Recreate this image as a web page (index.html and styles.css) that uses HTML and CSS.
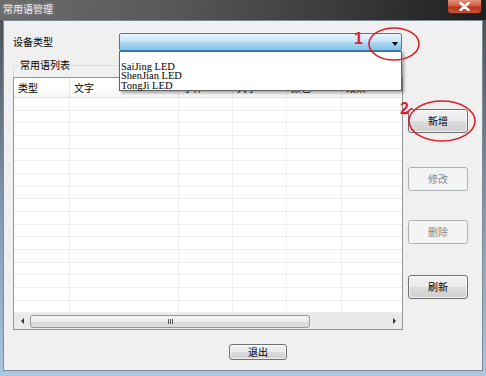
FILE: index.html
```html
<!DOCTYPE html>
<html lang="zh-CN">

<head>
  <meta charset="UTF-8">
  <title>常用语管理</title>
  <link rel="stylesheet" href="styles.css">
</head>

<body>
  <div class="window">
    <div class="titlebar">
      <span class="title">常用语管理</span>
      <button class="close">
        <svg width="11" height="9" viewBox="0 0 11 9"><path d="M1.5 1 L9.5 8 M9.5 1 L1.5 8" stroke="#fff" stroke-width="2.4" stroke-linecap="round"/></svg>
      </button>
    </div>
    <div class="client">
      <div class="device-row">
        <label class="device-label">设备类型</label>
        <div class="combo">
          <span class="combo-arrow"></span>
          <ul class="combo-list">
            <li></li>
            <li>SaiJing LED</li>
            <li>ShenJian LED</li>
            <li>TongJi LED</li>
          </ul>
        </div>
      </div>
      <div class="main">
        <fieldset class="group">
          <legend>常用语列表</legend>
          <div class="listview">
            <div class="lv-header">
              <div>类型</div>
              <div>文字</div>
              <div>字体</div>
              <div>大小</div>
              <div>颜色</div>
              <div>效果</div>
            </div>
            <div class="lv-body">
              <div></div>
              <div></div>
              <div></div>
              <div></div>
              <div></div>
              <div></div>
            </div>
            <div class="hscroll">
              <span class="sb-btn"><span class="arrow-left"></span></span>
              <div class="thumb"><span class="grip"></span></div>
              <div class="track"></div>
              <span class="sb-btn"><span class="arrow-right"></span></span>
            </div>
          </div>
        </fieldset>
        <div class="actions">
          <button class="btn btn-add">新增</button>
          <button class="btn btn-edit" disabled>修改</button>
          <button class="btn btn-del" disabled>删除</button>
          <button class="btn btn-refresh">刷新</button>
        </div>
      </div>
      <div class="footer">
        <button class="btn btn-exit">退出</button>
      </div>
    </div>

    <span class="mark mark-1">1</span>
    <span class="mark mark-2">2</span>
    <svg class="marks" width="486" height="376" viewBox="0 0 486 376">
      <ellipse cx="394" cy="44" rx="25" ry="16" fill="none" stroke="#dc1f28" stroke-width="1.6"/>
      <ellipse cx="442" cy="121" rx="33" ry="20" fill="none" stroke="#dc1f28" stroke-width="1.6"/>
      <path d="M404 114 Q408 112 412 108" fill="none" stroke="#dc1f28" stroke-width="1.6"/>
    </svg>
  </div>
</body>

</html>
```

FILE: styles.css
```css
* {
  margin: 0;
  padding: 0;
  box-sizing: border-box;
}

body {
  width: 486px;
  height: 376px;
  overflow: hidden;
  font-family: "Noto Sans CJK SC", sans-serif;
  font-size: 10px;
  color: #000;
}

.window {
  position: relative;
  display: flex;
  flex-direction: column;
  height: 376px;
  background: linear-gradient(to bottom, #4a4a4a 0, #59616b 60px, #7f95ab 200px, #a9c6e3 376px);
}

.titlebar {
  height: 20px;
  display: flex;
  justify-content: space-between;
  align-items: flex-start;
  background: linear-gradient(100deg, #6c6c6c 0%, #585858 35%, #3a3a3a 70%, #1d1d1d 100%);
}

.title {
  padding: 3px 0 0 3px;
  line-height: 12px;
  color: #ececec;
  text-shadow: 0 0 4px rgba(255, 255, 255, 0.35);
}

.close {
  width: 35px;
  height: 14px;
  margin-right: 4px;
  border: 1px solid #4a1d15;
  border-top: none;
  border-radius: 0 0 4px 4px;
  background: linear-gradient(#e2927e, #cf5a3f 45%, #b8321a 55%, #c9563c);
  display: flex;
  align-items: center;
  justify-content: center;
}

.client {
  flex: 1;
  margin: 0 3px 5px 3px;
  padding: 12px 0 0 9px;
  background-color: #f0f0f0;
  border: 1px solid #7d8a97;
}

/* device row */

.device-row {
  display: flex;
  align-items: center;
  height: 18px;
}

.device-label {
  width: 106px;
  line-height: 12px;
}

.combo {
  position: relative;
  width: 283px;
  height: 18px;
  border: 1px solid #3c7fb1;
  border-radius: 2px;
  background: linear-gradient(#eaf6fd, #c6e6f8 45%, #aad8f3 55%, #84c0e7);
}

.combo-arrow {
  position: absolute;
  right: 3px;
  top: 8px;
  border-left: 3px solid transparent;
  border-right: 3px solid transparent;
  border-top: 4px solid #000;
}

.combo-list {
  position: absolute;
  left: -1px;
  right: -1px;
  top: 17px;
  list-style: none;
  background-color: #fff;
  border: 1px solid #646464;
  box-shadow: 2px 2px 3px rgba(0, 0, 0, 0.35);
  font-family: "Liberation Serif", serif;
  font-size: 10.5px;
  line-height: 9.5px;
  z-index: 2;
}

.combo-list li {
  height: 9.5px;
  padding-left: 1px;
}

/* list group */

.main {
  display: flex;
  margin-top: 8px;
}

.group {
  width: 390px;
  min-width: 0;
  border: 1px solid #d5dfe5;
  border-radius: 3px;
}

.group legend {
  margin-left: 5px;
  padding: 0 1px;
  line-height: 12px;
}

.listview {
  display: flex;
  flex-direction: column;
  height: 253px;
  margin: 6px -1px -1px;
  border: 1px solid #8f969e;
  background-color: #fff;
}

.lv-header,
.lv-body {
  display: grid;
  grid-template-columns: 56px 109px 54px 54px 55px 1fr;
}

.lv-header {
  height: 20px;
  border-bottom: 1px solid #e3e3e3;
  background: linear-gradient(#fff 0%, #fff 50%, #f4f5f6 100%);
}

.lv-header div {
  padding-left: 4px;
  line-height: 19px;
  border-right: 1px solid #e5e5e5;
}

.lv-body {
  flex: 1;
  background: repeating-linear-gradient(to bottom, #fff 0, #fff 11.67px, #eeeeee 11.67px, #eeeeee 12.67px);
}

.lv-body div {
  border-right: 1px solid #eeeeee;
}

.lv-header div:last-child,
.lv-body div:last-child {
  border-right: none;
}

.hscroll {
  display: flex;
  align-items: center;
  height: 16px;
  background-color: #eaeaea;
}

.sb-btn {
  width: 16px;
  height: 16px;
  display: flex;
  align-items: center;
  justify-content: center;
}

.arrow-left {
  border-top: 3px solid transparent;
  border-bottom: 3px solid transparent;
  border-right: 3px solid #333;
}

.arrow-right {
  border-top: 3px solid transparent;
  border-bottom: 3px solid transparent;
  border-left: 3px solid #333;
}

.thumb {
  width: 280px;
  height: 13px;
  display: flex;
  align-items: center;
  justify-content: center;
  border: 1px solid #979797;
  border-radius: 3px;
  background: linear-gradient(#f7f7f7, #ececec 50%, #d9d9d9 51%, #dedede);
}

.grip {
  width: 5px;
  height: 5px;
  background: repeating-linear-gradient(to right, #555 0, #555 1px, transparent 1px, transparent 2px);
}

.track {
  flex: 1;
}

/* buttons */

.actions {
  display: flex;
  flex-direction: column;
  margin-left: 5px;
}

.btn {
  width: 60px;
  height: 24px;
  font: inherit;
  line-height: 12px;
  color: #000;
  border: 1px solid #707070;
  border-radius: 3px;
  background: linear-gradient(#f2f2f2 0%, #ebebeb 49%, #dddddd 50%, #cfcfcf 100%);
  box-shadow: inset 0 0 0 1px rgba(255, 255, 255, 0.7);
}

.btn:disabled {
  color: #8a8a8a;
  border-color: #adb2b5;
  background: #f4f4f4;
  box-shadow: none;
}

.btn-add {
  margin-top: 50px;
}

.btn-edit {
  margin-top: 34px;
}

.btn-del {
  margin-top: 29px;
}

.btn-refresh {
  margin-top: 31px;
}

.footer {
  padding: 14px 0 0 216px;
}

.btn-exit {
  width: 58px;
  height: 16px;
}

/* red annotations */

.mark {
  position: absolute;
  font-family: "Liberation Sans", sans-serif;
  font-weight: bold;
  font-size: 16px;
  line-height: 16px;
  color: #dc1f28;
  z-index: 3;
}

.mark-1 {
  left: 354px;
  top: 31px;
}

.mark-2 {
  left: 400px;
  top: 101px;
}

.marks {
  position: absolute;
  left: 0;
  top: 0;
  pointer-events: none;
  z-index: 3;
}
```
